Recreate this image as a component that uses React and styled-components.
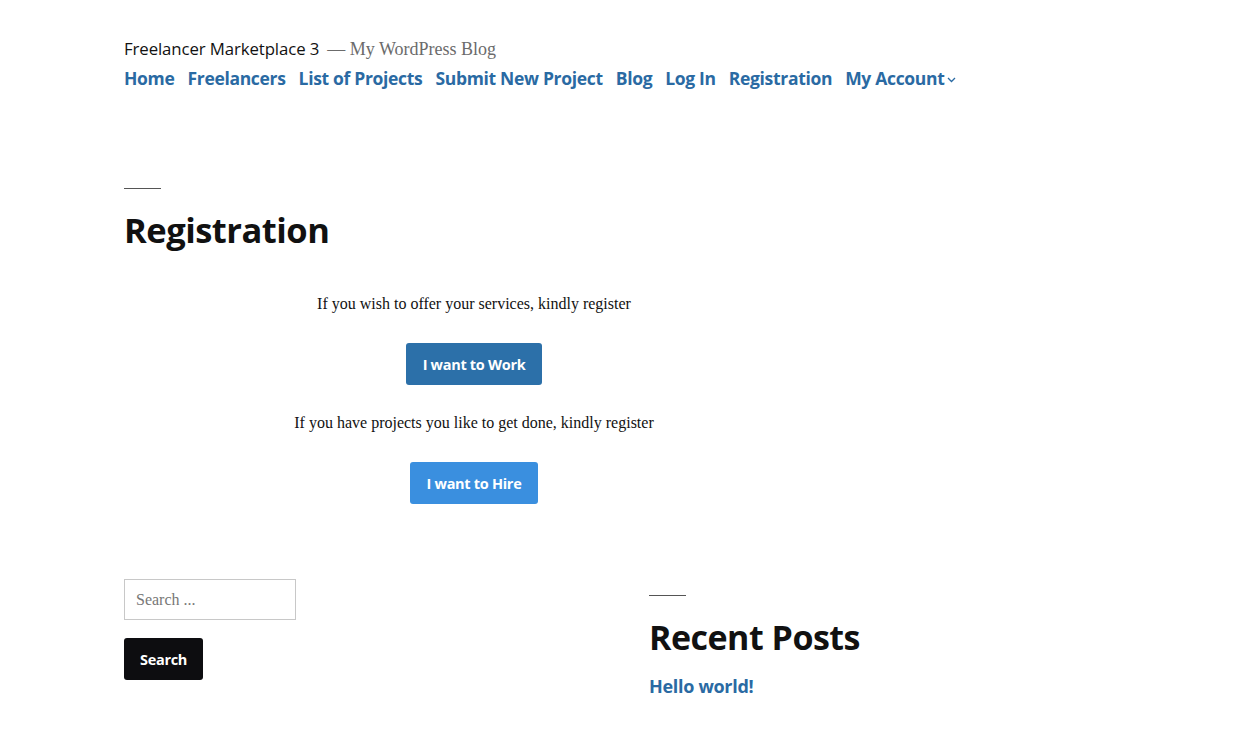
import React from 'react'
import styled, { createGlobalStyle } from 'styled-components'

const GlobalStyle = createGlobalStyle`
  html, body {
    margin: 0;
    padding: 0;
    background: #fff;
  }
  body {
    font-family: "Open Sans", "Noto Sans", sans-serif;
    color: #111;
  }
`

const navItems = ['Home', 'Freelancers', 'List of Projects', 'Submit New Project', 'Blog', 'Log In', 'Registration', 'My Account']

const App = () => {
  return (
    <>
      <GlobalStyle />
      <Page>
        <Header>
          <Branding>
            <SiteTitle>Freelancer Marketplace 3</SiteTitle>
            <Tagline>— My WordPress Blog</Tagline>
          </Branding>
          <Nav>
            {navItems.map(item => (
              <NavLink key={item}>
                {item}
                {item === 'My Account' && (
                  <svg width="9" height="6" viewBox="0 0 9 6">
                    <path d="M1 1l3.5 3.5L8 1" fill="none" stroke="#2a6aa3" strokeWidth="1.3" />
                  </svg>
                )}
              </NavLink>
            ))}
          </Nav>
        </Header>

        <Main>
          <Rule />
          <PageTitle>Registration</PageTitle>
          <Content>
            <Lead>If you wish to offer your services, kindly register</Lead>
            <ActionButton $tone="dark">I want to Work</ActionButton>
            <Lead>If you have projects you like to get done, kindly register</Lead>
            <ActionButton $tone="light">I want to Hire</ActionButton>
          </Content>
        </Main>

        <Footer>
          <Widget>
            <SearchInput placeholder="Search ..." />
            <SearchButton>Search</SearchButton>
          </Widget>
          <Widget>
            <Rule />
            <WidgetTitle>Recent Posts</WidgetTitle>
            <PostLink>Hello world!</PostLink>
          </Widget>
        </Footer>
      </Page>
    </>
  )
}

const Page = styled.div`
  padding: 37px 124px 0;
`

const Header = styled.header`
  display: flex;
  flex-direction: column;
`

const Branding = styled.div`
  display: flex;
  align-items: baseline;
  gap: 8px;
  height: 26px;
`

const SiteTitle = styled.span`
  font-size: 16.8px;
  color: #111;
  letter-spacing: -0.1px;
`

const Tagline = styled.span`
  font-family: "Liberation Serif", serif;
  font-size: 18px;
  color: #6b6b6b;
`

const Nav = styled.nav`
  display: flex;
  gap: 13px;
  height: 30px;
  align-items: center;
`

const NavLink = styled.a`
  display: flex;
  align-items: center;
  gap: 3px;
  font-size: 17.5px;
  font-weight: 700;
  color: #2a6aa3;
  letter-spacing: -0.32px;
  cursor: pointer;
  svg {
    margin-top: 3px;
  }
`

const Main = styled.main`
  padding-top: 95px;
  width: 700px;
`

const Rule = styled.div`
  width: 37px;
  height: 1px;
  background: #555;
`

const PageTitle = styled.h1`
  margin: 20px 0 0;
  font-size: 34.5px;
  font-weight: 700;
  line-height: 42px;
  letter-spacing: -0.5px;
  color: #111;
`

const Content = styled.div`
  display: flex;
  flex-direction: column;
  align-items: center;
  padding-top: 42px;
`

const Lead = styled.p`
  margin: 0;
  font-family: "Liberation Serif", serif;
  font-size: 16px;
  line-height: 22px;
  color: #111;
`

const ActionButton = styled.button`
  margin: 28px 0 27px;
  height: 42px;
  padding: 0 17px;
  border: none;
  border-radius: 3px;
  background: ${p => (p.$tone === 'dark' ? '#2c70a9' : '#3a8fdf')};
  color: #fff;
  font-family: "Open Sans", sans-serif;
  font-size: 14.5px;
  font-weight: 700;
  letter-spacing: -0.3px;
`

const Footer = styled.footer`
  display: grid;
  grid-template-columns: 525px 1fr;
  padding-top: 48px;
`

const Widget = styled.div`
  display: flex;
  flex-direction: column;
  align-items: flex-start;
  &:last-child {
    padding-top: 16px;
  }
`

const SearchInput = styled.input`
  box-sizing: border-box;
  width: 172px;
  height: 41px;
  padding: 0 11px;
  border: 1px solid #c8c8c8;
  font-family: "Liberation Serif", serif;
  font-size: 16px;
  &::placeholder {
    color: #777;
  }
`

const SearchButton = styled.button`
  margin-top: 18px;
  height: 42px;
  padding: 0 16px;
  border: none;
  border-radius: 3px;
  background: #0d0d10;
  color: #fff;
  font-family: "Open Sans", sans-serif;
  font-size: 14.5px;
  font-weight: 700;
  letter-spacing: -0.3px;
`

const WidgetTitle = styled.h2`
  margin: 20px 0 0;
  font-size: 34px;
  line-height: 42px;
  font-weight: 700;
  letter-spacing: -0.5px;
  color: #111;
`

const PostLink = styled.a`
  margin-top: 16px;
  font-size: 18px;
  font-weight: 700;
  color: #2a6aa3;
  letter-spacing: -0.3px;
`

export default App
